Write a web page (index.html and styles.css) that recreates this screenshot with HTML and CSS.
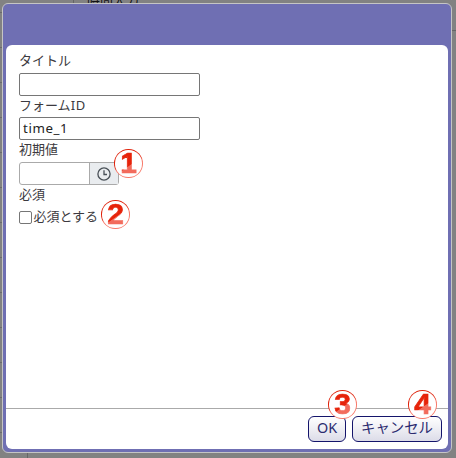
FILE: index.html
```html
<!DOCTYPE html>
<html lang="ja">
<head>
<meta charset="utf-8">
<title>時間入力</title>
<link rel="stylesheet" href="styles.css">
</head>
<body>
<div class="behind"><span class="behind-title">時間入力</span><i class="line-top"></i><i class="line-bottom"></i><i class="line-right"></i></div>
<div class="dialog">
  <div class="titlebar"></div>
  <div class="panel">
    <form class="fields">
      <div class="label first">タイトル</div>
      <input class="text" type="text">
      <div class="label second">フォーム<span class="latin">ID</span></div>
      <input class="text" type="text" value="time_1">
      <div class="label">初期値</div>
      <div class="time">
        <span class="time-value"></span>
        <span class="time-button"><svg width="14" height="14" viewBox="0 0 14 14"><circle cx="7" cy="7" r="6.1"/><path d="M7 3.3V7.5H10"/></svg></span>
        <span class="badge b1"><b>1</b></span>
      </div>
      <div class="label last">必須</div>
      <div class="check"><span class="box"></span><span class="check-label">必須とする</span><span class="badge b2"><b>2</b></span></div>
    </form>
    <div class="actions">
      <div class="button ok">OK<span class="badge b3"><b>3</b></span></div>
      <div class="button cancel">キャンセル<span class="badge b4"><b>4</b></span></div>
    </div>
  </div>
</div>
</body>
</html>
```
FILE: styles.css
```css
* { box-sizing: border-box; }
body {
  margin: 0;
  width: 456px;
  height: 458px;
  padding: 3px 0 0 2px;
  overflow: hidden;
  position: relative;
  background: #828282;
  color: #3c3a40;
  font: 13px/20px "Noto Sans", "Noto Sans CJK JP", sans-serif;
}
.behind {
  position: absolute;
  inset: 0;
  background: repeating-linear-gradient(to bottom, transparent 0 34px, #6b6b6b 34px 35px) 0 -22px / 3px 500px no-repeat;
}
.behind-title { position: absolute; left: 87px; top: -7px; font-size: 13px; line-height: 14px; color: #111; white-space: nowrap; }
.line-top { position: absolute; left: 73px; top: 0; width: 1px; height: 3px; background: #666; }
.line-bottom { position: absolute; left: 27px; bottom: 0; width: 1px; height: 5px; background: #666; }
.line-right { position: absolute; right: 0; top: 30px; width: 4px; height: 1px; background: #666; }
.dialog {
  position: relative;
  width: 450px;
  height: 450px;
  padding: 0 3px 3px;
  display: flex;
  flex-direction: column;
  background: #6f6fb3;
  border: 1px solid #c5c5c5;
  border-radius: 6px;
}
.titlebar { height: 41px; flex: none; }
.panel {
  flex: 1;
  display: flex;
  flex-direction: column;
  background: #fff;
  border-radius: 6px;
}
.fields { flex: 1; padding: 5px 13px 0; }
.label { height: 22px; line-height: 19px; white-space: nowrap; }
.first { height: 23px; line-height: 21px; }
.second { height: 21px; }
.last { height: 20px; }
.latin { letter-spacing: 0.8px; }
.text {
  display: block;
  width: 181px;
  height: 23px;
  margin: 0;
  padding: 0 3px 1px;
  border: 1px solid #767676;
  border-radius: 2px;
  background: #fff;
  color: #222;
  font: 13.3px/20px "Noto Sans", "Noto Sans CJK JP", sans-serif;
  letter-spacing: 0.6px;
}
.time {
  position: relative;
  display: flex;
  width: 100px;
  height: 23px;
  border: 1px solid #aaa;
  border-radius: 3px;
}
.time-value { width: 69px; }
.time-button {
  flex: 1;
  display: flex;
  align-items: center;
  justify-content: center;
  border-left: 1px solid #aaa;
  background: #e9ecef;
}
.time-button svg { fill: none; stroke: #495057; stroke-width: 1.3; }
.check { position: relative; display: flex; align-items: center; gap: 1.5px; height: 25px; white-space: nowrap; }
.check-label { padding-bottom: 3px; }
.box { width: 13px; height: 13px; border: 1px solid #767676; border-radius: 2px; background: #fff; }
.actions {
  height: 41px;
  flex: none;
  display: flex;
  justify-content: flex-end;
  gap: 6px;
  padding: 7px 6px 0 0;
  border-top: 1px solid #aaa;
}
.button {
  position: relative;
  height: 26px;
  border: 1px solid #14146b;
  border-radius: 6px;
  background: linear-gradient(#fff, #dcdce8);
  color: #2b2b70;
  font-size: 14.4px;
  line-height: 22px;
  text-align: center;
  white-space: nowrap;
}
.ok { width: 38px; }
.cancel { width: 90px; }
.badge {
  position: absolute;
  width: 29px;
  height: 29px;
  border-radius: 50%;
  padding: 1px;
  background: linear-gradient(155deg, #df2009 48%, #f87565 55%);
}
.badge::before { content: ""; position: absolute; inset: 1.4px; border-radius: 50%; background: #fff; }
.badge b {
  position: relative;
  top: -1px;
  display: block;
  height: 28px;
  background: linear-gradient(145deg, #e6230a 56%, #f26b5c 58%);
  -webkit-background-clip: text;
  background-clip: text;
  color: transparent;
  -webkit-text-stroke: 0.7px transparent;
  font: bold 30px/28px "Liberation Sans", sans-serif;
  text-align: center;
}
.b1 { left: 94px; top: -14px; }
.b2 { left: 82px; top: -5px; }
.b3 { left: 19px; top: -27px; }
.b4 { left: 55px; top: -27px; }
```
